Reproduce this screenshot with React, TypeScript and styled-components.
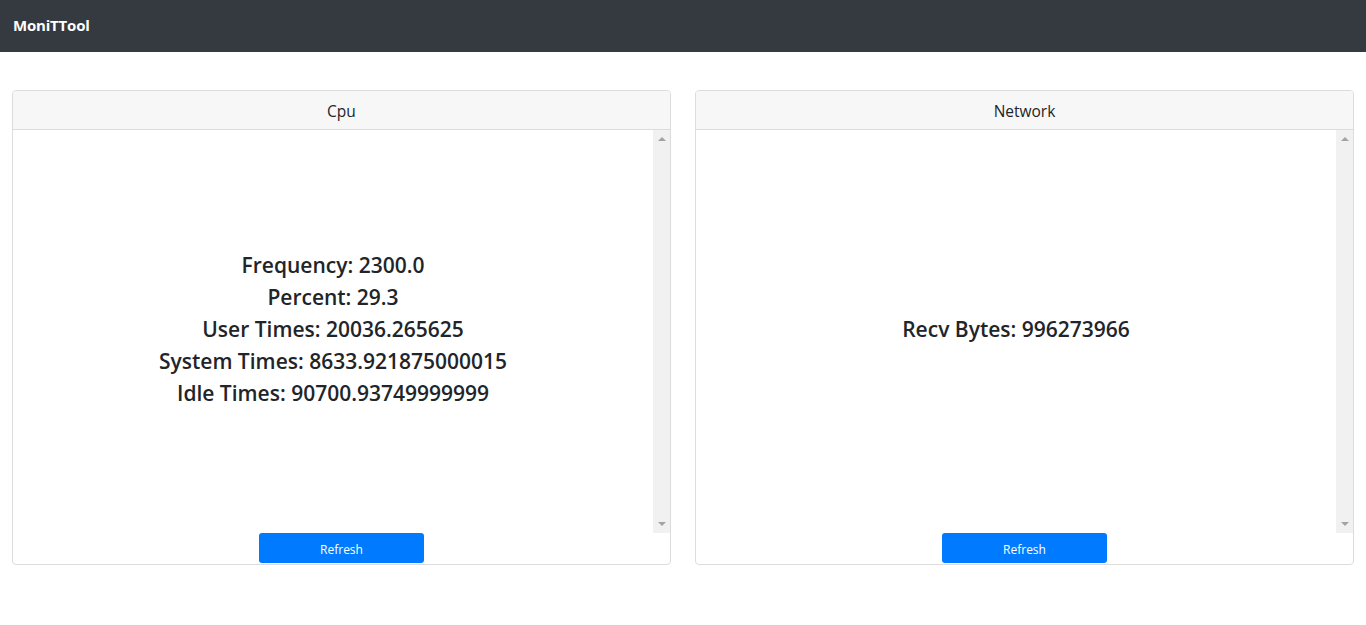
import React from 'react'
import styled, { createGlobalStyle } from 'styled-components'

const GlobalStyle = createGlobalStyle`
  body {
    margin: 0;
    font-family: "Open Sans", "Noto Sans", sans-serif;
    color: #212529;
    background: #fff;
  }
`

const Navbar = styled.nav`
  height: 52px;
  background: #343a40;
  display: flex;
  align-items: center;
  padding: 0 13px;
`

const Brand = styled.span`
  color: #fff;
  font-weight: 700;
  font-size: 15px;
  letter-spacing: -0.2px;
  margin-top: -2px;
`

const Main = styled.main`
  display: grid;
  grid-template-columns: 659px 659px;
  column-gap: 24px;
  padding: 38px 12px 0;
`

const Card = styled.section`
  border: 1px solid #dcdcdc;
  border-radius: 4px;
  display: flex;
  flex-direction: column;
  align-items: center;
  overflow: hidden;
`

const CardHeader = styled.header`
  align-self: stretch;
  height: 39px;
  box-sizing: border-box;
  padding-top: 2px;
  background: #f7f7f7;
  border-bottom: 1px solid #dcdcdc;
  display: flex;
  align-items: center;
  justify-content: center;
  font-size: 15.5px;
  font-weight: 500;
`

const CardBody = styled.div`
  align-self: stretch;
  height: 403px;
  display: flex;
`

const StatList = styled.div`
  flex: 1;
  padding-top: 2px;
  display: flex;
  flex-direction: column;
  align-items: center;
  justify-content: center;
`

// scrollbars are hidden in the screenshot browser, so the track is drawn
const ScrollTrack = styled.div`
  width: 17px;
  background: #f1f1f1;
  display: flex;
  flex-direction: column;
  justify-content: space-between;
`

const ScrollButton = styled.div<{ $down?: boolean }>`
  height: 17px;
  display: flex;
  align-items: center;
  justify-content: center;

  &::before {
    content: '';
    width: 0;
    height: 0;
    border-left: 4px solid transparent;
    border-right: 4px solid transparent;
    ${(p) =>
      p.$down
        ? 'border-top: 4px solid #a3a3a3; margin-top: -1px;'
        : 'border-bottom: 4px solid #a3a3a3; margin-top: 1px;'}
  }
`

const Stat = styled.h5`
  margin: 0 0 8px;
  font-size: 21px;
  font-weight: 600;
  line-height: 24px;
  text-align: center;
`

const RefreshButton = styled.button`
  width: 165px;
  height: 30px;
  margin-bottom: 1px;
  border: none;
  border-radius: 3px;
  background: #007bff;
  color: #fff;
  font-family: inherit;
  font-size: 12px;
  padding-top: 3px;
`

type PanelProps = { title: string; stats: string[] }

const Panel = ({ title, stats }: PanelProps) => (
  <Card>
    <CardHeader>{title}</CardHeader>
    <CardBody>
      <StatList>
        {stats.map((s) => (
          <Stat key={s}>{s}</Stat>
        ))}
      </StatList>
      <ScrollTrack>
        <ScrollButton />
        <ScrollButton $down />
      </ScrollTrack>
    </CardBody>
    <RefreshButton>Refresh</RefreshButton>
  </Card>
)

const App = () => {
  return (
    <>
      <GlobalStyle />
      <Navbar>
        <Brand>MoniTTool</Brand>
      </Navbar>
      <Main>
        <Panel
          title="Cpu"
          stats={[
            'Frequency: 2300.0',
            'Percent: 29.3',
            'User Times: 20036.265625',
            'System Times: 8633.921875000015',
            'Idle Times: 90700.93749999999',
          ]}
        />
        <Panel title="Network" stats={['Recv Bytes: 996273966']} />
      </Main>
    </>
  )
}

export default App
